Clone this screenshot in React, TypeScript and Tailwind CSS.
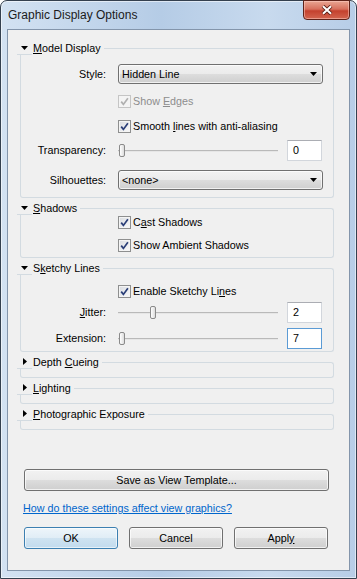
import React from 'react';

const BTN =
  'h-[22px] rounded-[3px] border border-[#707070] bg-[linear-gradient(#f2f2f2,#ebebeb_50%,#dddddd_50%,#cfcfcf)] shadow-[inset_0_0_0_1px_rgba(255,255,255,0.7)] flex items-center justify-center';

const Check: React.FC<{ disabled?: boolean }> = ({ disabled }) => (
  <span
    className={`w-[13px] h-[13px] shrink-0 border flex items-center justify-center ${
      disabled
        ? 'border-[#c5c5c5] bg-[#f4f4f4]'
        : 'border-[#8e8f8f] bg-[linear-gradient(135deg,#d8dbe0,#fafafa)] shadow-[inset_0_0_0_1px_#f4f4f4]'
    }`}
  >
    <svg width="9" height="9" viewBox="0 0 9 9">
      <path
        d="M1.2 4.6L3.4 7.4L7.9 1.2"
        fill="none"
        stroke={disabled ? '#b0b0b0' : '#2b3f78'}
        strokeWidth="1.7"
      />
    </svg>
  </span>
);

const CheckRow: React.FC<{ disabled?: boolean; children: React.ReactNode; className?: string }> = ({
  disabled,
  children,
  className = '',
}) => (
  <div className={`flex items-center h-[13px] pl-[97px] ${className}`}>
    <Check disabled={disabled} />
    <span className={`ml-[2px] leading-[13px] ${disabled ? 'text-[#8d8d8d]' : ''}`}>{children}</span>
  </div>
);

const Select: React.FC<{ value: string }> = ({ value }) => (
  <div className="w-[205px] h-[20px] rounded-[3px] border border-[#707070] bg-[linear-gradient(#f2f2f2,#ebebeb_50%,#dddddd_50%,#cfcfcf)] shadow-[inset_0_0_0_1px_rgba(255,255,255,0.7)] flex items-center pl-[3px] pr-[5px]">
    <span className="flex-1">{value}</span>
    <svg width="7" height="4" viewBox="0 0 7 4">
      <path d="M0 0h7L3.5 4z" fill="#000" />
    </svg>
  </div>
);

const Slider: React.FC<{ pos: 'start' | 'jitter' }> = ({ pos }) => (
  <div className="relative w-[160px] h-[21px] flex items-center">
    <div className="w-full h-[2px] bg-[#b9b9b9] border-b border-[#e6e6e6]" />
    <div
      className={`absolute top-[4px] w-[6px] h-[13px] rounded-[2px] border border-[#8a8a8a] bg-[linear-gradient(90deg,#ffffff,#dcdcdc)] ${
        pos === 'start' ? 'left-[1px]' : 'left-[32px]'
      }`}
    />
  </div>
);

const NumBox: React.FC<{ value: string; focused?: boolean }> = ({ value, focused }) => (
  <div
    className={`ml-[9px] w-[35px] h-[21px] bg-white border flex items-center pl-[5px] ${
      focused ? 'border-[#5b9bd5]' : 'border-[#d2d6dc] border-t-[#abadb3]'
    }`}
  >
    {value}
  </div>
);

const Label: React.FC<{ children: React.ReactNode }> = ({ children }) => (
  <span className="w-[97px] shrink-0 text-right pr-[12px]">{children}</span>
);

const Group: React.FC<{
  title: React.ReactNode;
  open?: boolean;
  children?: React.ReactNode;
  bodyClass?: string;
}> = ({ title, open, children, bodyClass = '' }) => (
  <div className="mb-[3px]">
    <div className="flex h-[14px]">
      <div className="w-[15px] h-[14px] border-b border-[#d3dbe1] flex items-center justify-center">
        {open ? (
          <svg width="7" height="4" viewBox="0 0 7 4">
            <path d="M0 0h7L3.5 4z" fill="#000" />
          </svg>
        ) : (
          <svg width="4" height="7" viewBox="0 0 4 7">
            <path d="M0 0L4 3.5L0 7z" fill="#000" />
          </svg>
        )}
      </div>
      <span className="ml-[1px] leading-[14px] whitespace-nowrap">{title}</span>
      <div className="flex-1 ml-[3px] mt-[7px] border-t border-r border-[#d3dbe1] rounded-tr-[3px]" />
    </div>
    <div className={`ml-[3px] border-l border-r border-b border-[#d3dbe1] rounded-b-[3px] ${bodyClass}`}>
      {children}
    </div>
  </div>
);

const App: React.FC = () => {
  return (
    <div className="w-[357px] h-[579px] flex flex-col rounded-t-[7px] border border-[#34404f] bg-[linear-gradient(90deg,#d3e2f2,#b5cce6_45%,#c8daee_75%,#b7cde7)] shadow-[inset_0_0_0_1px_rgba(255,255,255,0.55)] font-['Liberation_Sans',Arial,sans-serif] text-[10.75px] text-black select-none">
      {/* Title bar */}
      <div className="relative h-[28px] shrink-0 flex items-center pl-[7px]">
        <span className="text-[12px] text-[#1b1b1b]">Graphic Display Options</span>
        <div className="absolute top-[-1px] right-[6px] w-[47px] h-[20px] rounded-b-[4px] border border-[#5e2219] bg-[linear-gradient(#e9a693,#d7705d_45%,#c4412e_55%,#d3654f)] shadow-[inset_0_0_0_1px_rgba(255,210,200,0.5)] flex items-center justify-center">
          <svg width="12" height="10" viewBox="0 0 12 10">
            <path d="M2 1.2L10 8.8M10 1.2L2 8.8" stroke="#5a2016" strokeWidth="3.8" />
            <path d="M2 1.2L10 8.8M10 1.2L2 8.8" stroke="#ffffff" strokeWidth="2" />
          </svg>
        </div>
      </div>

      {/* Client area */}
      <div className="flex-1 mx-[6px] mb-[7px] border border-[#8395ab] bg-[#f0f0f0] flex flex-col">
        <div className="pt-[11px] pl-[9px] w-[326px]">
          <Group
            open
            title={
              <>
                <u>M</u>odel Display
              </>
            }
            bodyClass="pt-[9px] pb-[7px]"
          >
            <div className="flex items-center h-[20px]">
              <Label>Style:</Label>
              <Select value="Hidden Line" />
            </div>
            <CheckRow disabled className="mt-[11px]">
              Show <u>E</u>dges
            </CheckRow>
            <CheckRow className="mt-[12px]">
              Smooth <u>l</u>ines with anti-aliasing
            </CheckRow>
            <div className="flex items-center h-[21px] mt-[7px]">
              <Label>Transparency:</Label>
              <Slider pos="start" />
              <NumBox value="0" />
            </div>
            <div className="flex items-center h-[20px] mt-[9px]">
              <Label>Silhouettes:</Label>
              <Select value="<none>" />
            </div>
          </Group>

          <Group
            open
            title={
              <>
                <u>S</u>hadows
              </>
            }
            bodyClass="pt-[1px] pb-[5px]"
          >
            <CheckRow>
              C<u>a</u>st Shadows
            </CheckRow>
            <CheckRow className="mt-[10px]">Show Ambient Shadows</CheckRow>
          </Group>

          <Group
            open
            title={
              <>
                S<u>k</u>etchy Lines
              </>
            }
            bodyClass="pt-[10px] pb-[2px]"
          >
            <CheckRow>
              Enable Sketchy Li<u>n</u>es
            </CheckRow>
            <div className="flex items-center h-[21px] mt-[4px]">
              <Label>
                <u>J</u>itter:
              </Label>
              <Slider pos="jitter" />
              <NumBox value="2" />
            </div>
            <div className="flex items-center h-[21px] mt-[5px]">
              <Label>Extension:</Label>
              <Slider pos="start" />
              <NumBox value="7" focused />
            </div>
          </Group>

          <Group
            title={
              <>
                Depth <u>C</u>ueing
              </>
            }
            bodyClass="h-[9px]"
          />
          <Group
            title={
              <>
                <u>L</u>ighting
              </>
            }
            bodyClass="h-[9px]"
          />
          <Group
            title={
              <>
                <u>P</u>hotographic Exposure
              </>
            }
            bodyClass="h-[9px]"
          />
        </div>

        {/* Bottom actions */}
        <div className="pl-[16px] mt-[36px]">
          <div className={`${BTN} w-[305px]`}>Save as View Template...</div>
          <div className="mt-[10px] -ml-[1px] h-[14px] leading-[14px] text-[#0066cc] underline">
            How do these settings affect view graphics?
          </div>
          <div className="mt-[12px] flex gap-[11px]">
            <div className="w-[94px] h-[22px] rounded-[3px] border border-[#3c7fb1] bg-[linear-gradient(#eef5fa,#e0edf6_50%,#cfe3f1_50%,#c2dbee)] shadow-[inset_0_0_0_1px_rgba(255,255,255,0.6)] flex items-center justify-center">
              OK
            </div>
            <div className={`${BTN} w-[94px]`}>Cancel</div>
            <div className={`${BTN} w-[94px]`}>
              Appl<u>y</u>
            </div>
          </div>
        </div>
      </div>
    </div>
  );
};

export default App;
